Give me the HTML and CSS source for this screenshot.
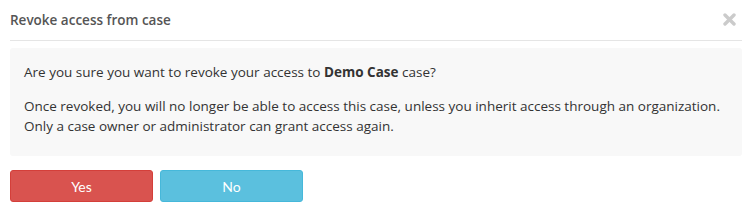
FILE: index.html
```html
<!DOCTYPE html>
<html lang="en">
<head>
    <meta charset="UTF-8">
    <title>Revoke access</title>
    <link rel="stylesheet" href="styles.css">
</head>
<body>
    <div class="modal">
        <div class="modal-header">
            <h4 class="modal-title">Revoke access from case</h4>
            <span class="close">
                <svg width="13" height="13" viewBox="0 0 13 13">
                    <path d="M2 2 L11 11 M11 2 L2 11" stroke="currentColor" stroke-width="3.4" stroke-linecap="round"/>
                </svg>
            </span>
        </div>
        <div class="modal-body">
            <p>Are you sure you want to revoke your access to <strong>Demo Case</strong> case?</p>
            <p>Once revoked, you will no longer be able to access this case, unless you inherit access through an organization.<br>
            Only a case owner or administrator can grant access again.</p>
        </div>
        <div class="modal-footer">
            <button class="btn btn-danger">Yes</button>
            <button class="btn btn-info">No</button>
        </div>
    </div>
</body>
</html>
```

FILE: styles.css
```css
body {
    margin: 0;
    font-family: "Open Sans", Arial, sans-serif;
    color: #333;
    background-color: #fff;
}
.modal {
    padding: 0 8px 0 10px;
}
.modal-header {
    display: flex;
    align-items: center;
    justify-content: space-between;
    height: 40px;
    border-bottom: 1px solid #e5e5e5;
}
.modal-title {
    margin: 0;
    font-size: 13.5px;
    font-weight: 600;
    color: #555;
}
.close {
    display: flex;
    color: #cbcbcb;
    margin: 0 6px 2px 0;
    cursor: pointer;
}
.modal-body {
    margin-top: 7px;
    padding: 14px 14px 20px;
    background-color: #f8f8f8;
    border-radius: 3px;
    font-size: 13.5px;
}
.modal-body p {
    margin: 0 0 14px;
    line-height: 20px;
}
.modal-body p:last-child {
    margin-bottom: 0;
}
.modal-footer {
    display: flex;
    gap: 7px;
    margin-top: 14px;
}
.btn {
    width: 143px;
    height: 32px;
    font-family: Lato, "Open Sans", sans-serif;
    font-size: 14px;
    color: #fff;
    border-radius: 3px;
    cursor: pointer;
}
.btn-danger {
    background-color: #d9534f;
    border: 1px solid #d43f3a;
}
.btn-info {
    background-color: #5bc0de;
    border: 1px solid #46b8da;
}
```
